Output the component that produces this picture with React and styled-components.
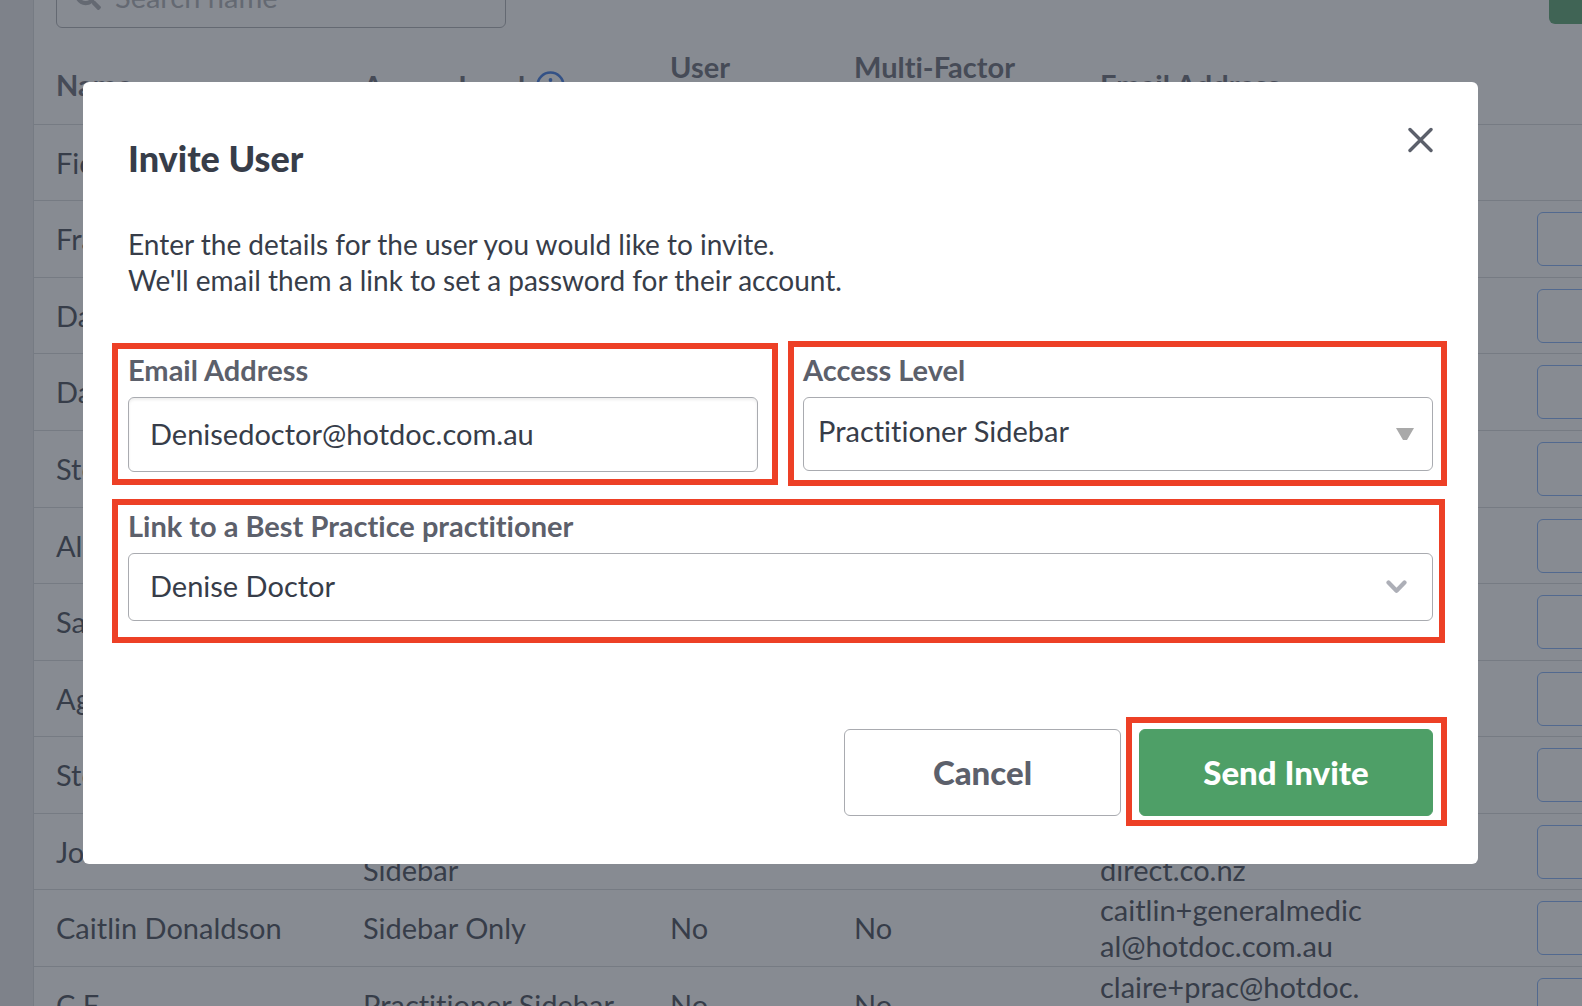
import React, { useState } from "react";
import styled, { createGlobalStyle } from "styled-components";
import { FaSearch } from "react-icons/fa";

const GlobalStyle = createGlobalStyle`
  * {
    box-sizing: border-box;
  }
  body {
    margin: 0;
    background: #e8e9eb;
    color: #373d49;
    font-family: Lato, sans-serif;
    font-size: 29px;
    line-height: 36px;
    font-variant-ligatures: none;
  }
  button, input, select {
    font: inherit;
    color: inherit;
    font-variant-ligatures: none;
  }
`;

const Page = styled.div`
  height: 100vh;
  overflow: hidden;
`;

const Card = styled.main`
  margin: 0 -100px 0 33px;
  min-height: 100vh;
  background: #fff;
  border-left: 1px solid #d5d7da;
`;

/* the page sits slightly scrolled, so the toolbar starts above the fold */
const Toolbar = styled.div`
  display: flex;
  align-items: center;
  justify-content: space-between;
  height: 62px;
  margin: -34px 0 20px;
  padding: 0 22px;
`;

const SearchBox = styled.label`
  display: flex;
  align-items: center;
  gap: 14px;
  width: 450px;
  height: 62px;
  padding: 0 18px;
  border: 1px solid #a9abb0;
  border-radius: 6px;
  color: #a9abb0;
`;

const SearchInput = styled.input`
  flex: 1;
  min-width: 0;
  padding: 0;
  border: 0;
  outline: 0;
  background: none;
  &::placeholder {
    color: #a9abb0;
    opacity: 1;
  }
`;

const AddButton = styled.button`
  width: 111px;
  height: 54px;
  border: 0;
  border-radius: 6px;
  background: #4e9f67;
`;

const UserTable = styled.table`
  width: 100%;
  table-layout: fixed;
  border-spacing: 0;
  text-align: left;
`;

const Col = styled.col`
  width: ${({ $width }) => $width};
`;

const HeadCell = styled.th`
  height: 77px;
  padding: 0 0 3px ${({ $first }) => ($first ? "22px" : "0")};
  border-bottom: 1px solid #d5d7da;
  color: #5c606b;
  font-weight: 700;
`;

const HeadLabel = styled.span`
  display: flex;
  align-items: center;
  gap: 11px;
  padding-top: 3px;
  svg {
    margin-bottom: 2px;
  }
`;

const Row = styled.tr`
  height: 76px;
  &:nth-child(-2n + 4),
  &:nth-child(2n + 5) {
    height: 77px;
  }
`;

const Cell = styled.td`
  padding: 0 0 0 ${({ $first }) => ($first ? "22px" : "0")};
  border-bottom: 1px solid #d5d7da;
  white-space: pre-line;
`;

const EditButton = styled.button`
  display: block;
  width: 110px;
  height: 54px;
  border: 1px solid #7aabf8;
  border-radius: 6px;
  background: none;
`;

const Overlay = styled.div`
  position: fixed;
  inset: 0;
  padding: 82px 104px 0 83px;
  background: rgba(55, 61, 73, 0.6);
`;

const Modal = styled.section`
  padding: 45px 45px 48px;
  border-radius: 6px;
  background: #fff;
`;

const ModalHeader = styled.header`
  display: flex;
  align-items: flex-start;
  justify-content: space-between;
  margin-bottom: 46px;
`;

const Title = styled.h1`
  margin: 9px 0 0;
  font-size: 36px;
  line-height: 44px;
  font-weight: 900;
`;

const CloseButton = styled.button`
  display: flex;
  padding: 0;
  border: 0;
  background: none;
  color: #5c606b;
  cursor: pointer;
`;

const Intro = styled.p`
  margin: 0 0 54px;
  font-size: 28px;
`;

const Fields = styled.div`
  display: grid;
  grid-template-columns: 1fr 1fr;
  gap: 36px 45px;
  margin-bottom: 108px;
`;

/* red outline drawn around the step to fill in */
const Highlight = styled.div`
  position: relative;
  grid-column: ${({ $wide }) => ($wide ? "1 / -1" : "auto")};
  &::after {
    content: "";
    position: absolute;
    inset: ${({ $inset }) => $inset};
    border: 6px solid #ed4026;
    pointer-events: none;
  }
`;

const Label = styled.label`
  display: block;
  margin-bottom: 9px;
  color: #5c606b;
  font-weight: 700;
`;

const TextInput = styled.input`
  display: block;
  width: 100%;
  height: 75px;
  padding: 0 21px 2px;
  border: 1px solid #a9abb0;
  border-radius: 6px;
  background: #fff;
  box-shadow: inset 0 2px 3px rgba(0, 0, 0, 0.07);
`;

const SelectBox = styled.div`
  position: relative;
  svg {
    position: absolute;
    top: 50%;
    right: ${({ $iconRight }) => $iconRight};
    transform: translateY(-50%);
    pointer-events: none;
  }
`;

const Select = styled.select`
  display: block;
  appearance: none;
  width: 100%;
  height: ${({ $height }) => $height};
  padding: ${({ $padding }) => $padding};
  border: 1px solid #a9abb0;
  border-radius: 6px;
  background: #fff;
`;

const Actions = styled.footer`
  display: flex;
  justify-content: flex-end;
  gap: 18px;
`;

const Button = styled.button`
  display: block;
  width: ${({ $primary }) => ($primary ? "294px" : "277px")};
  height: 87px;
  padding: 0 0 2px;
  border: 1px solid ${({ $primary }) => ($primary ? "#4e9f67" : "#a9abb0")};
  border-radius: 6px;
  background: ${({ $primary }) => ($primary ? "#4e9f67" : "#fff")};
  color: ${({ $primary }) => ($primary ? "#fff" : "#5c606b")};
  font-size: 33px;
  font-weight: 900;
  cursor: pointer;
`;

const users = [
  { name: "Fiona Hall", access: "Sidebar Only", email: "fiona@hotdoc.com.au", owner: true },
  { name: "Frank Moss", access: "Sidebar Only", email: "frank@hotdoc.com.au" },
  { name: "Daniel Reid", access: "Sidebar Only", email: "daniel@hotdoc.com.au" },
  { name: "Dana White", access: "Sidebar Only", email: "dana@hotdoc.com.au" },
  { name: "Stephen Lee", access: "Sidebar Only", email: "steve@hotdoc.com.au" },
  { name: "Alice Brown", access: "Sidebar Only", email: "alice@hotdoc.com.au" },
  { name: "Sam Green", access: "Sidebar Only", email: "sam@hotdoc.com.au" },
  { name: "Agnes Clark", access: "Sidebar Only", email: "agnes@hotdoc.com.au" },
  { name: "Stella King", access: "Sidebar Only", email: "stella@hotdoc.com.au" },
  { name: "Joanne Bell", access: "Practitioner\nSidebar", email: "joanne@medical\ndirect.co.nz" },
  { name: "Caitlin Donaldson", access: "Sidebar Only", email: "caitlin+generalmedic\nal@hotdoc.com.au" },
  { name: "C F", access: "Practitioner Sidebar", email: "claire+prac@hotdoc.\ncom.au" },
];

function InfoIcon() {
  return (
    <svg width="29" height="29" viewBox="0 0 29 29" fill="none">
      <circle cx="14.5" cy="14.5" r="13" stroke="#2f6fe0" strokeWidth="2.6" />
      <circle cx="14.5" cy="9" r="1.9" fill="#2f6fe0" />
      <path d="M14.5 13.5 V21" stroke="#2f6fe0" strokeWidth="2.6" strokeLinecap="round" />
    </svg>
  );
}

function UserRow({ user }) {
  return (
    <Row>
      <Cell $first>{user.name}</Cell>
      <Cell>{user.access}</Cell>
      <Cell>No</Cell>
      <Cell>No</Cell>
      <Cell>{user.email}</Cell>
      <Cell>{!user.owner && <EditButton aria-label={"Edit " + user.name} />}</Cell>
    </Row>
  );
}

function Users() {
  return (
    <Card>
      <Toolbar>
        <SearchBox>
          <FaSearch size={26} />
          <SearchInput type="search" placeholder="Search name" aria-label="Search name" />
        </SearchBox>
        <AddButton aria-label="Add user" />
      </Toolbar>
      <UserTable>
        <colgroup>
          <Col $width="329px" />
          <Col $width="307px" />
          <Col $width="184px" />
          <Col $width="246px" />
          <Col $width="437px" />
          <Col />
        </colgroup>
        <thead>
          <tr>
            <HeadCell $first>Name</HeadCell>
            <HeadCell>
              <HeadLabel>
                Access Level <InfoIcon />
              </HeadLabel>
            </HeadCell>
            <HeadCell>
              User
              <br />
              Active
            </HeadCell>
            <HeadCell>
              Multi-Factor
              <br />
              Enabled
            </HeadCell>
            <HeadCell>Email Address</HeadCell>
            <HeadCell />
          </tr>
        </thead>
        <tbody>
          {users.map((user) => (
            <UserRow key={user.name} user={user} />
          ))}
        </tbody>
      </UserTable>
    </Card>
  );
}

function InviteModal() {
  const [email, setEmail] = useState("Denisedoctor@hotdoc.com.au");

  return (
    <Overlay>
      <Modal role="dialog" aria-labelledby="invite-title">
        <ModalHeader>
          <Title id="invite-title">Invite User</Title>
          <CloseButton aria-label="Close">
            <svg width="25" height="26" viewBox="0 0 25 26" fill="none">
              <path
                d="M2 2.5 L23 23.5 M23 2.5 L2 23.5"
                stroke="currentColor"
                strokeWidth="3.4"
                strokeLinecap="round"
              />
            </svg>
          </CloseButton>
        </ModalHeader>
        <Intro>
          Enter the details for the user you would like to invite.
          <br />
          We'll email them a link to set a password for their account.
        </Intro>
        <Fields>
          <Highlight $inset="-9px -20px -13px -16px">
            <Label htmlFor="email">Email Address</Label>
            <TextInput
              id="email"
              type="email"
              value={email}
              onChange={(e) => setEmail(e.target.value)}
            />
          </Highlight>
          <Highlight $inset="-11px -14px -14px -15px">
            <Label htmlFor="access">Access Level</Label>
            <SelectBox $iconRight="19px">
              <Select id="access" $height="74px" $padding="0 60px 6px 14px">
                <option>Practitioner Sidebar</option>
                <option>Sidebar Only</option>
              </Select>
              <svg width="18" height="12" viewBox="0 0 18 12">
                <polygon points="0,0 18,0 11,12 7,12" fill="#a9a9a9" />
              </svg>
            </SelectBox>
          </Highlight>
          <Highlight $wide $inset="-9px -12px -22px -16px">
            <Label htmlFor="practitioner">Link to a Best Practice practitioner</Label>
            <SelectBox $iconRight="26px">
              <Select id="practitioner" $height="68px" $padding="0 60px 2px 21px">
                <option>Denise Doctor</option>
              </Select>
              <svg width="21" height="14" viewBox="0 0 21 14" fill="none">
                <path
                  d="M2.5 2.5 L10.5 10.8 L18.5 2.5"
                  stroke="#adafb7"
                  strokeWidth="4.2"
                  strokeLinecap="round"
                  strokeLinejoin="round"
                />
              </svg>
            </SelectBox>
          </Highlight>
        </Fields>
        <Actions>
          <Button>Cancel</Button>
          <Highlight $inset="-12px -14px -10px -13px">
            <Button $primary>Send Invite</Button>
          </Highlight>
        </Actions>
      </Modal>
    </Overlay>
  );
}

export default function App() {
  return (
    <Page>
      <GlobalStyle />
      <Users />
      <InviteModal />
    </Page>
  );
}
